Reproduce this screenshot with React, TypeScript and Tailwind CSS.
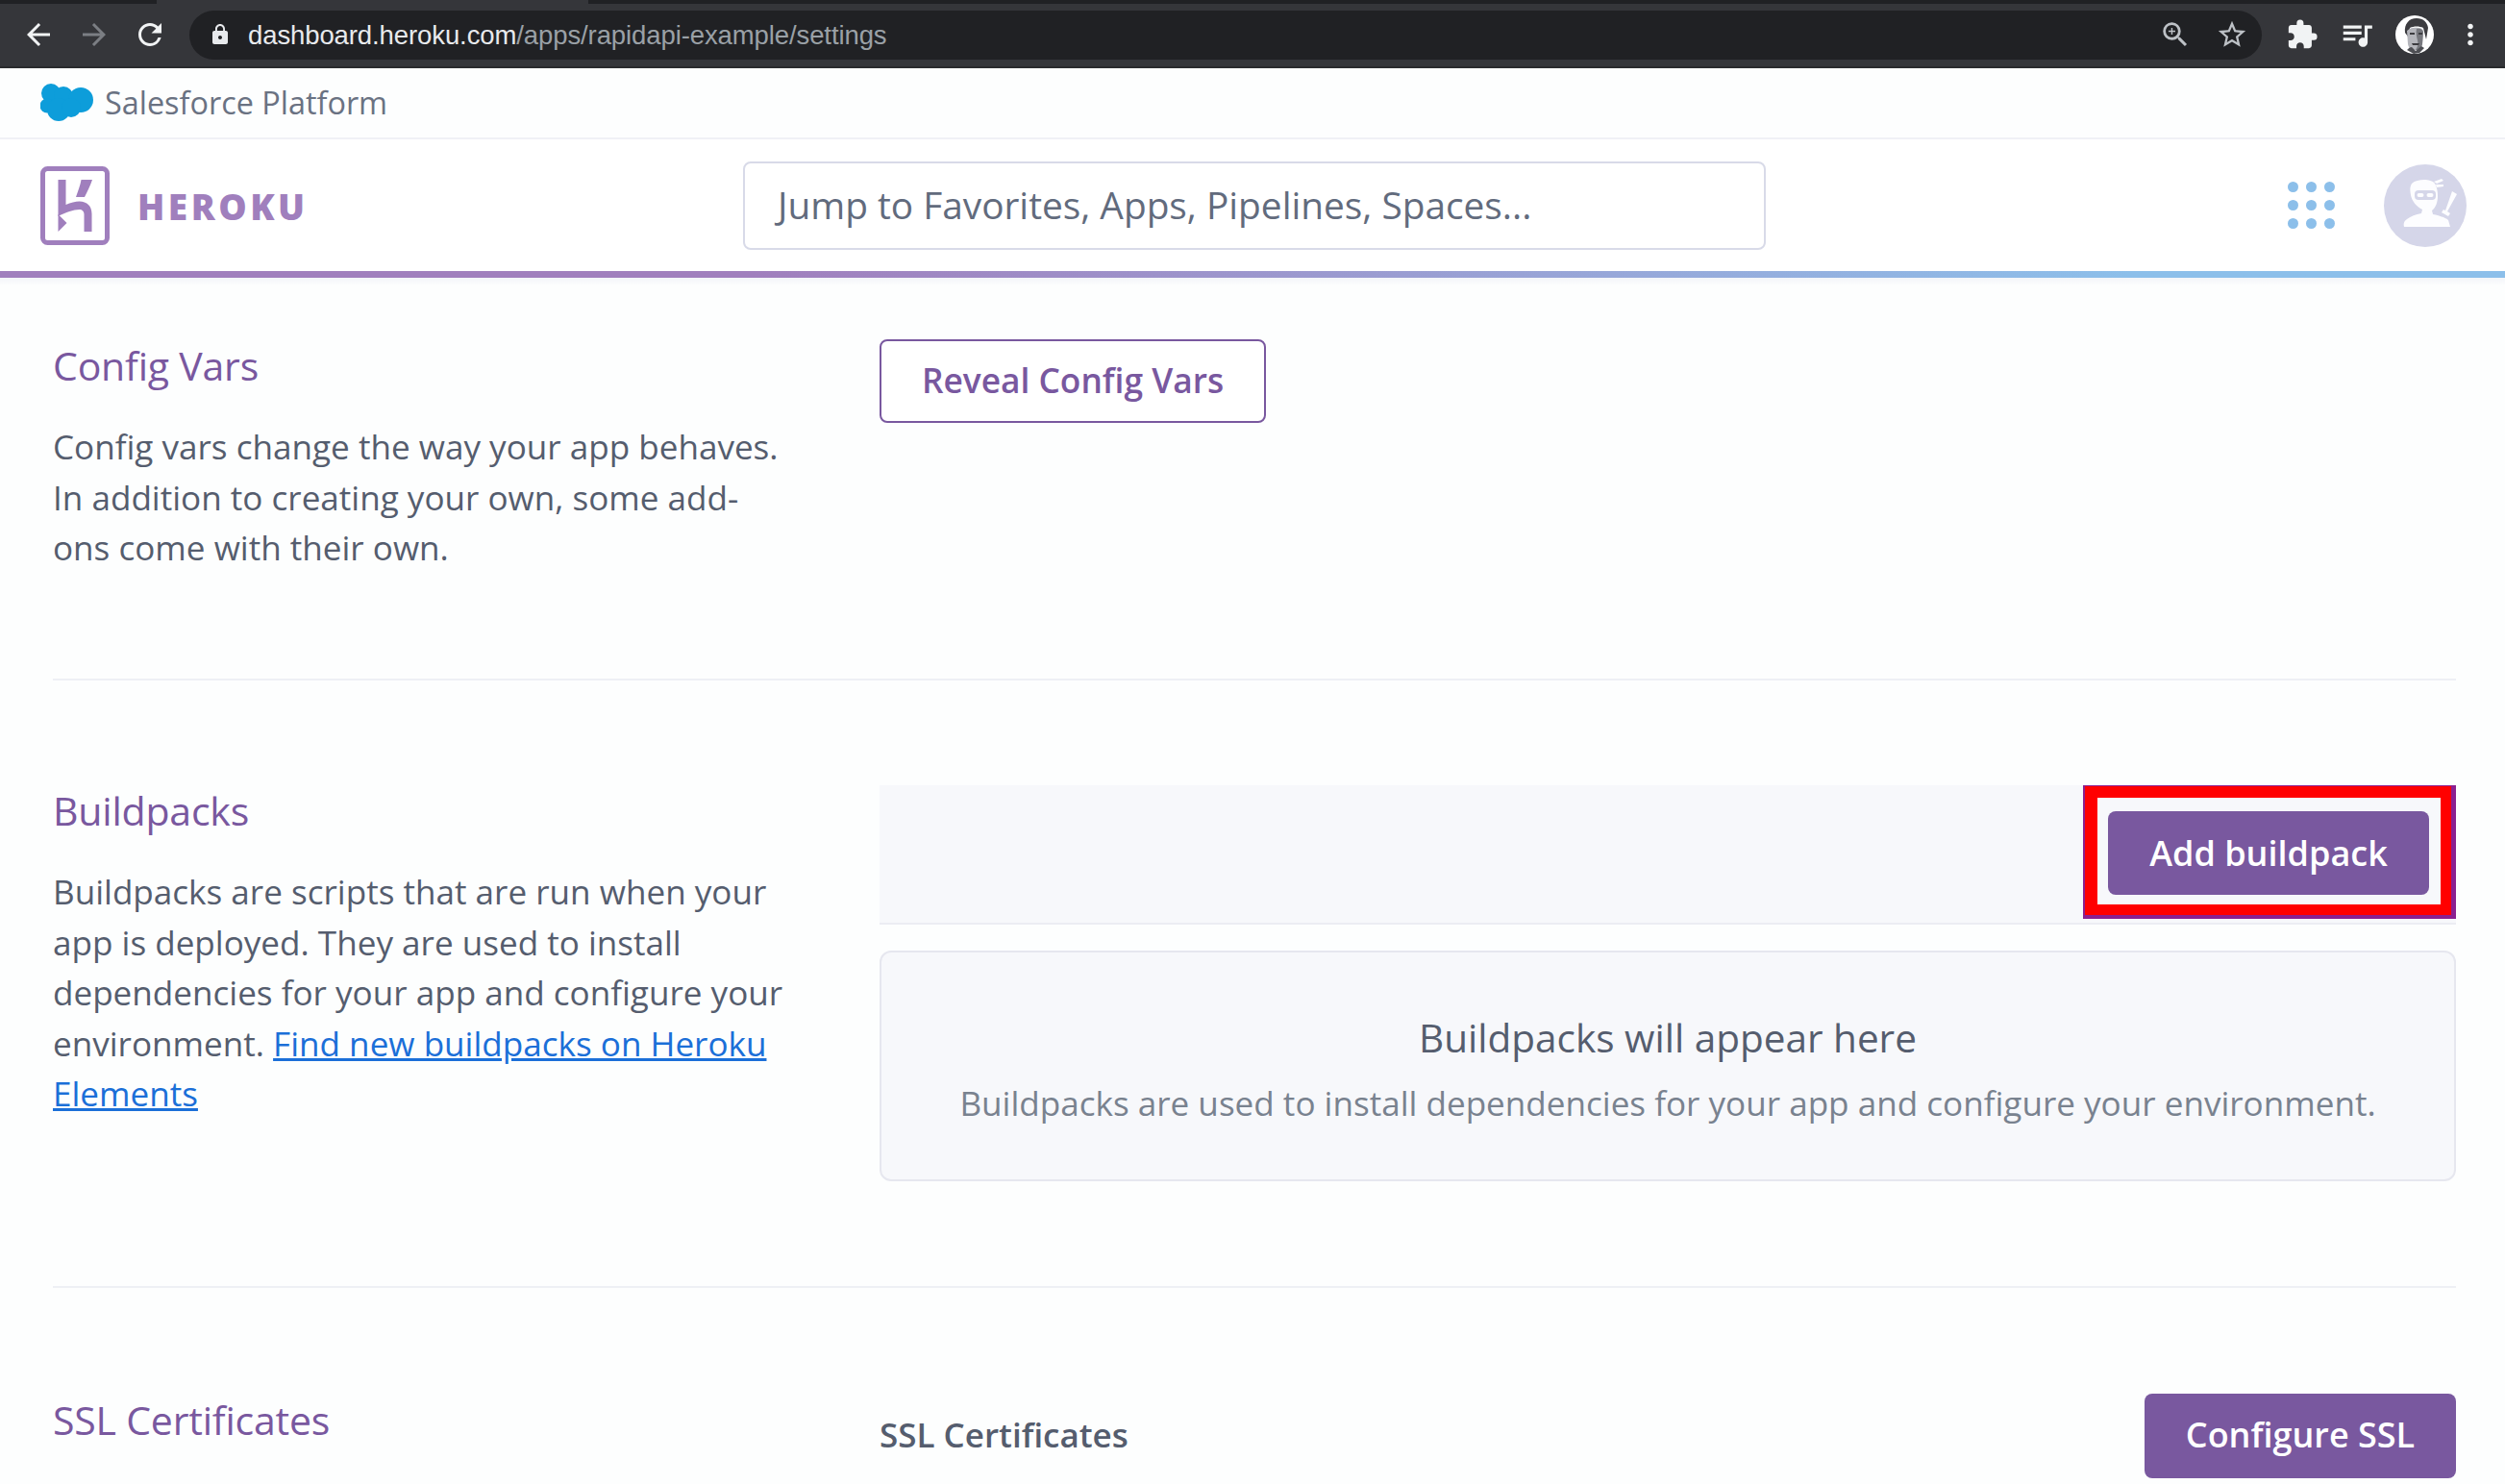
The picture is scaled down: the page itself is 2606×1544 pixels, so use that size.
import React from "react";
import { MdArrowBack, MdArrowForward, MdRefresh, MdLock, MdZoomIn, MdStarBorder, MdExtension, MdQueueMusic, MdMoreVert } from "react-icons/md";

function Cloud() {
  return (
    <svg width="56" height="40" viewBox="42 88 56 40" className="shrink-0" fill="#0d9dda">
      <circle cx="53" cy="98" r="10" />
      <circle cx="66" cy="101" r="10" />
      <circle cx="84" cy="105" r="13" />
      <circle cx="49" cy="111" r="7.5" />
      <circle cx="61" cy="115" r="12" />
      <circle cx="74" cy="113" r="10" />
    </svg>
  );
}

function HerokuMark() {
  return (
    <svg width="72" height="82" viewBox="42 173 72 82" className="shrink-0" fill="#a07fbd">
      <rect x="44.5" y="175.5" width="67" height="77" rx="5" fill="none" stroke="#a07fbd" strokeWidth="5" />
      <path d="M60.5 187h8v26c5-2 10-3.5 14-3.500 8 0 13 5 13 13V241h-8v-18c0-3-2-5-5-5-6 0-14 3-22 7z" />
      <path d="M84.500 187H96c-2 6-5 12-8 18h-9c2-6 4.500-12 5.500-18z" />
      <path d="M60.500 223l9 9-9 9z" />
    </svg>
  );
}

function NinjaAvatar() {
  return (
    <svg width="86" height="86" viewBox="0 0 86 86" className="shrink-0">
      <circle cx="43" cy="43" r="43" fill="#d5d6e9" />
      <path d="M29 20c3-3 8-4 13-4 4 0 9 1 11 4 2 3 3 8 3 13 0 6-2 12-6 15l1 4c6 1 12 3 16 6l2 7H21c-1-3 0-6 3-8 4-3 9-5 15-6l1-4c-6-3-11-9-12-15-1-5-1-9 1-12z" fill="#fdfdff" />
      <path d="M52 18l8-3 2 2-7 3zM54 21l8 0 0 2-7 1z" fill="#fdfdff" />
      <path d="M71 28l5 3-10 18 3 2-2 3-7-4 2-3 2 1z" fill="#fdfdff" />
      <rect x="32" y="27" width="22" height="10" rx="4" fill="#d5d6e9" />
      <rect x="34.500" y="30" width="7" height="4" rx="2" fill="#fdfdff" />
      <rect x="44.500" y="30" width="7" height="4" rx="2" fill="#fdfdff" />
    </svg>
  );
}

function Portrait() {
  return (
    <svg width="40" height="40" viewBox="0 0 40 40" className="shrink-0">
      <circle cx="20" cy="20" r="20" fill="#fff" />
      <path d="M10 18C9 9 14 3 22 3c7 0 11 4 12 10l-2 12-3-12c-4-2-10-2-14 0l-2 9z" fill="#3c3c40" />
      <path d="M12 16c3-3 7-4 12-3 3 0 5 2 5 4l-1 13c-1 4-4 6-8 6-4 0-6-2-7-6z" fill="#b4b5bb" />
      <path d="M22 14c3-1 6 0 7 3l-1 13c-1 4-4 6-7 6 2-3 3-6 2-10-1-4-2-8-1-12z" fill="#77787e" />
      <path d="M15 18h5v2h-5zM24 18h4v2h-4z" fill="#3c3c40" />
      <path d="M17 29h8l-1 2h-6z" fill="#3c3c40" />
      <path d="M12 36c2-2 3-3 5-3l4 4 6-5 3 2-5 5-6 1z" fill="#4e4f54" />
    </svg>
  );
}

function Section({ title, children, right, border = true, className }: { title: string; children?: React.ReactNode; right?: React.ReactNode; border?: boolean; className: string }) {
  return (
    <section className={`grid grid-cols-[860px_1fr] ${border ? "border-b-2 border-[#eef0f5]" : ""} ${className}`}>
      <div className="w-[768px]">
        <h3 className="text-[41px] leading-[54px] font-normal text-[#79589f] tracking-[-0.2px]">{title}</h3>
        {children && <p className="mt-[31px] text-[35.1px] leading-[52.5px] text-[#555d6e]">{children}</p>}
      </div>
      <div>{right}</div>
    </section>
  );
}

export default function App() {
  return (
    <div className="relative h-[1544px] w-full overflow-hidden bg-[#fdfefe] font-['Open_Sans',sans-serif]">
      {/* Browser chrome */}
      <div className="relative h-[71px] bg-[#35363a] border-b-[2px] border-[#2a2b2e]">
        <div className="absolute left-0 top-0 h-[4px] w-full bg-[#202124]">
          <div className="ml-[163px] h-full w-[449px] bg-[#35363a]" />
        </div>
        <div className="flex h-full items-center pt-[3px]">
          <div className="flex w-[197px] items-center pl-[22px]">
            <MdArrowBack size={36} color="#f1f3f4" />
            <MdArrowForward size={36} color="#7b7e83" className="ml-[22px]" />
            <MdRefresh size={36} color="#f1f3f4" className="ml-[22px]" />
          </div>
          <div className="flex h-[51px] w-[2156px] items-center rounded-full bg-[#202124] pl-[20px] pr-[14px]">
            <MdLock size={24} color="#e8eaed" />
            <div className="ml-[17px] flex-1 pt-[2px] text-[27.5px] tracking-[-0.1px] text-[#e8eaed] font-['Liberation_Sans',sans-serif]">
              dashboard.heroku.com<span className="text-[#9aa0a6]">/apps/rapidapi-example/settings</span>
            </div>
            <MdZoomIn size={34} color="#bdc1c6" />
            <MdStarBorder size={34} color="#bdc1c6" className="ml-[25px]" />
          </div>
          <div className="flex flex-1 items-center pl-[25px]">
            <MdExtension size={34} color="#f1f3f4" />
            <MdQueueMusic size={38} color="#f1f3f4" className="ml-[21px]" />
            <div className="ml-[21px]"><Portrait /></div>
            <MdMoreVert size={34} color="#f1f3f4" className="ml-[21px]" />
          </div>
        </div>
      </div>

      {/* Salesforce row */}
      <div className="flex h-[74px] items-center border-b-2 border-[#f0f1f6] pl-[42px] bg-[#fdfefe]">
        <Cloud />
        <span className="ml-[11px] pb-[2px] text-[32.4px] text-[#6a7282]">Salesforce Platform</span>
      </div>

      {/* Heroku header */}
      <div className="flex h-[137px] items-center bg-white pl-[42px] pr-[40px]">
        <HerokuMark />
        <span className="ml-[29px] w-[630px] pt-[2px] text-[37px] font-extrabold leading-none tracking-[3.5px] text-[#a07fbd]">HEROKU</span>
        <div className="flex h-[92px] w-[1064px] items-center rounded-[8px] border-2 border-[#d8dae8] bg-white pl-[34px] text-[38.8px] text-[#626b7d]">
          Jump to Favorites, Apps, Pipelines, Spaces...
        </div>
        <div className="ml-[543px] grid grid-cols-3 gap-[8px]">
          {Array.from({ length: 9 }).map((_, i) => (
            <span key={i} className="h-[11px] w-[11px] rounded-full bg-[#8cbfea]" />
          ))}
        </div>
        <div className="ml-auto"><NinjaAvatar /></div>
      </div>
      <div className="h-[7px] bg-gradient-to-r from-[#a07fbd] from-30% to-[#8cbfea] to-85%" />
      <div className="h-[8px] bg-gradient-to-b from-[#f3f5f9] to-[#fdfefe]" />

      {/* Main */}
      <main className="pl-[55px] pr-[51px]">
        <Section
          title="Config Vars"
          className="h-[411px] pt-[56px]"
          right={
            <button className="h-[87px] w-[402px] rounded-[8px] border-2 border-[#79589f] bg-white pb-[2px] text-[35.3px] font-semibold text-[#79589f]">
              Reveal Config Vars
            </button>
          }
        >
          Config vars change the way your app behaves. In addition to creating your own, some add-ons come with their own.
        </Section>

        <Section
          title="Buildpacks"
          className="h-[632px] pt-[108px]"
          right={
            <div className="pt-[1px]">
              <div className="flex h-[145px] justify-end border-b-2 border-[#ecedf3] bg-[#f7f8fb]">
                <div className="h-[139px] w-[388px] border-t border-l-2 border-r-[5px] border-b-[4px] border-[#8b2090]">
                  <div className="h-full border-t-[12px] border-l-[13px] border-r-[11px] border-b-[11px] border-[#ff0000] pl-[11px] pt-[14px]">
                    <button className="h-[87px] w-[334px] rounded-[8px] bg-[#79589f] text-[36px] font-semibold text-white">Add buildpack</button>
                  </div>
                </div>
              </div>
              <div className="mt-[27px] flex h-[240px] flex-col items-center rounded-[12px] border-2 border-[#e6e7ef] bg-[#f7f8fb] pt-[62px]">
                <div className="text-[40.5px] leading-[54px] text-[#555d6e]">Buildpacks will appear here</div>
                <div className="mt-[14px] text-[35.1px] leading-[52px] text-[#79828f]">
                  Buildpacks are used to install dependencies for your app and configure your environment.
                </div>
              </div>
            </div>
          }
        >
          Buildpacks are scripts that are run when your app is deployed. They are used to install dependencies for your app and configure your environment.{" "}
          <a className="text-[#1b6fd8] underline">Find new buildpacks on Heroku Elements</a>
        </Section>

        <Section
          title="SSL Certificates"
          border={false}
          className="pt-[110px]"
          right={
            <div className="flex items-start justify-between">
              <div className="pt-[17px] text-[35px] font-semibold leading-[52px] text-[#555d6e]">SSL Certificates</div>
              <button className="h-[88px] w-[324px] rounded-[8px] bg-[#79589f] pb-[2px] text-[36px] font-semibold text-white">Configure SSL</button>
            </div>
          }
        />
      </main>
    </div>
  );
}
